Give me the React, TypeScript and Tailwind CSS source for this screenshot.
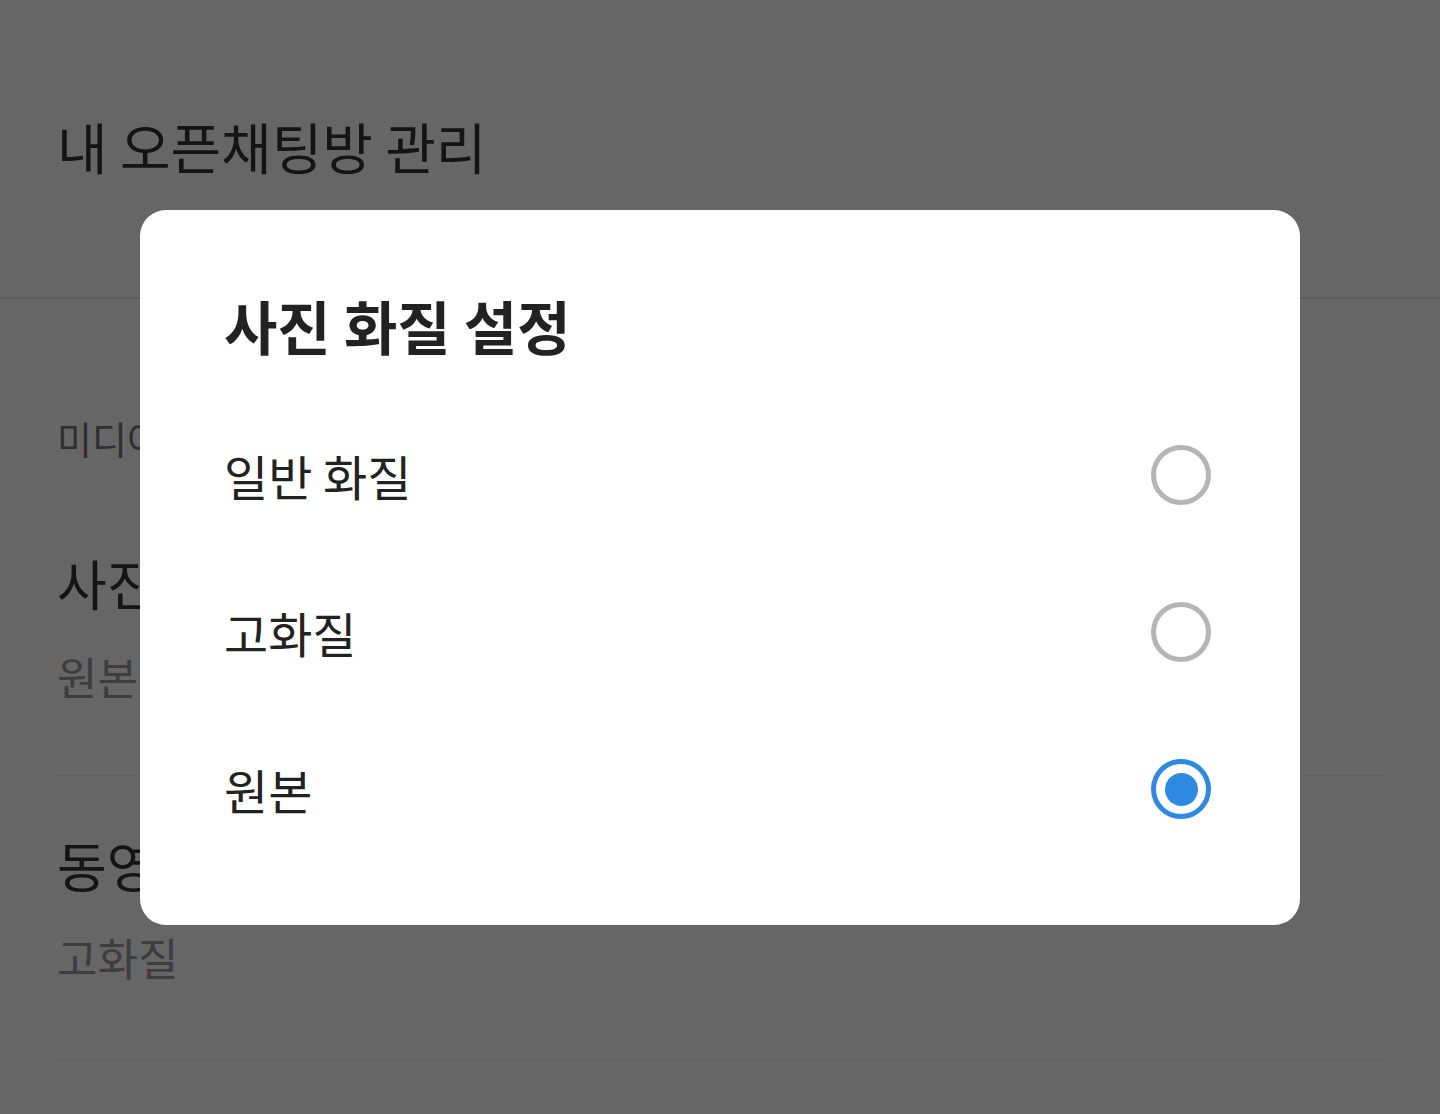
import { useState } from "react";

const FONT = {
  fontFamily: '"Noto Sans CJK KR", "Noto Sans", sans-serif',
};

const options = ["일반 화질", "고화질", "원본"];

function Radio({ checked }: { checked: boolean }) {
  return checked ? (
    <span className="flex h-[60px] w-[60px] items-center justify-center rounded-full border-[5px] border-[#2e89e0]">
      <span className="h-[33px] w-[33px] rounded-full bg-[#2e89e0]" />
    </span>
  ) : (
    <span className="block h-[60px] w-[60px] rounded-full border-[5px] border-[#b5b5b5]" />
  );
}

export default function App() {
  const [selected, setSelected] = useState("원본");

  return (
    <div className="relative h-[1114px] w-full overflow-hidden bg-white" style={FONT}>
      {/* 배경 설정 화면 */}
      <div className="h-[54px]" />
      <div className="mx-[55px] border-t border-[#f3f3f3]" />
      <div className="h-[242px] px-[57px] pt-[55px]">
        <h1 className="text-[55px] leading-[1.3] text-[#333]">내 오픈채팅방 관리</h1>
      </div>
      <div className="border-t-2 border-[#e4e4e4]" />

      <div className="px-[57px]">
        <p className="mt-[114px] text-[38px] leading-[1.3] text-[#777]">미디어</p>
        <p className="mt-[86px] text-[54px] leading-[1.3] text-[#333]">사진 화질</p>
        <p className="mt-[29px] text-[44px] leading-[1.3] text-[#999]">원본</p>
      </div>
      <div className="mx-[56px] mt-[70px] border-t border-[#eeeeee]" />
      <div className="px-[57px]">
        <p className="mt-[54px] text-[54px] leading-[1.3] text-[#333]">동영상 화질</p>
        <p className="mt-[29px] text-[44px] leading-[1.3] text-[#999]">고화질</p>
      </div>
      <div className="mx-[56px] mt-[74px] border-t border-[#eeeeee]" />

      {/* 딤 + 다이얼로그 */}
      <div className="absolute inset-0 bg-black/60">
        <div className="mx-[140px] mt-[210px] rounded-[26px] bg-white pb-[57px] pl-[84px] pr-[89px] pt-[81px]">
          <h2 className="text-[58px] font-bold leading-[1.2] text-[#222]">사진 화질 설정</h2>
          <div className="mt-[36px]">
            {options.map((label) => (
              <button
                key={label}
                onClick={() => setSelected(label)}
                className="flex h-[157px] w-full items-center justify-between text-left"
              >
                <span className="text-[48px] leading-none text-[#222]">{label}</span>
                <Radio checked={selected === label} />
              </button>
            ))}
          </div>
        </div>
      </div>
    </div>
  );
}
